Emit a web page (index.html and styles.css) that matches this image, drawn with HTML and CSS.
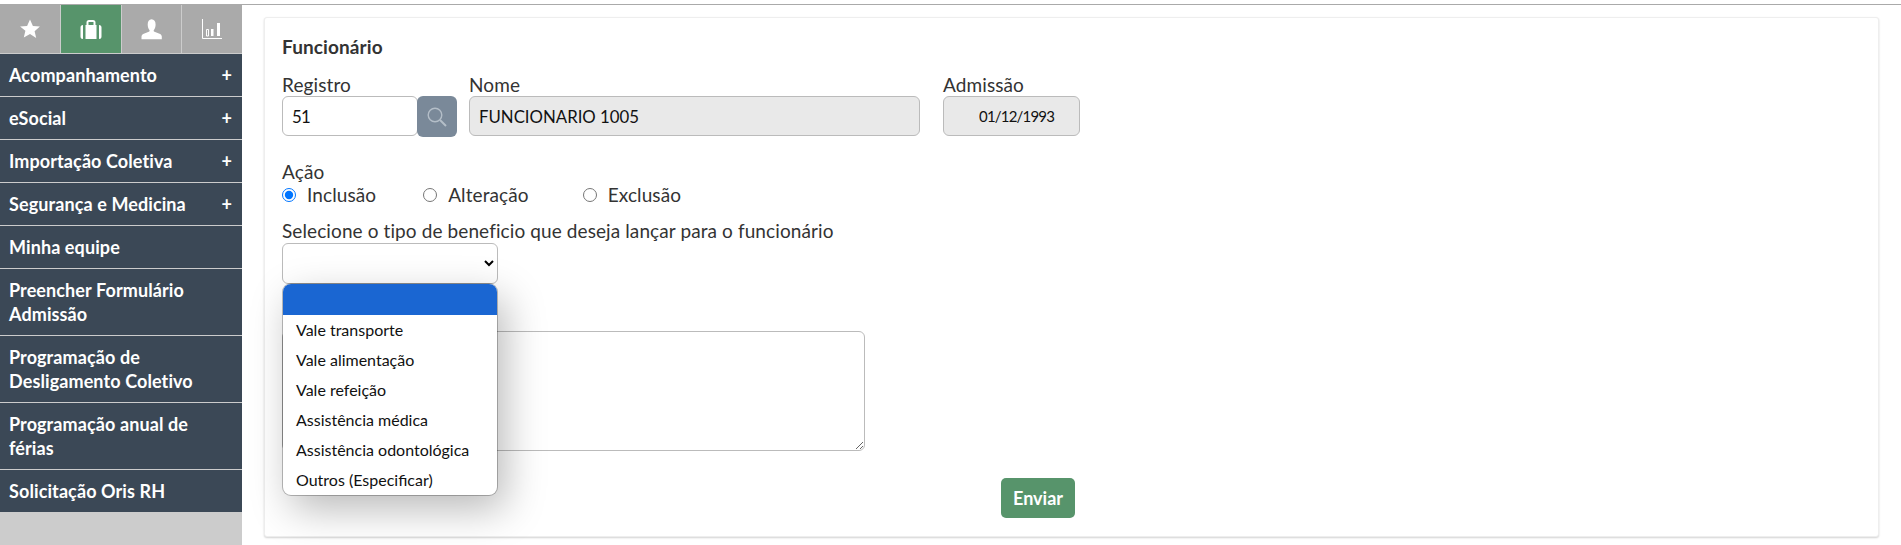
FILE: index.html
```html
<!DOCTYPE html>
<html lang="pt-BR">
<head>
  <meta charset="UTF-8">
  <title>Funcionário</title>
  <meta name="viewport" content="width=device-width, initial-scale=1.0">
  <link rel="stylesheet" href="styles.css">
</head>
<body>

  <div class="layout">

    <!-- Sidebar -->
    <aside class="sidebar">
      <div class="tabs">
        <div class="tab">
          <svg width="20" height="20" viewBox="0 0 20 20"><path fill="#fff" d="M10 0.500l2.900 6.400 7 .7-5.300 4.600 1.600 6.900L10 15l-6.200 3.600 1.600-6.900L.1 7.600l7-.7z"/></svg>
        </div>
        <div class="tab active">
          <svg width="22" height="21" viewBox="0 0 22 21"><path fill="#fff" d="M.5 8.500Q.5 6 3 6v14Q.5 20 .5 17.500zM5.500 6h1V3.500Q6.500 1 9 1h4q2.500 0 2.500 2.500V6h1v14h-11zM8.500 6h5V3H8.500zM19 6q2.500 0 2.500 2.500v9Q21.500 20 19 20z"/></svg>
        </div>
        <div class="tab">
          <svg width="21" height="21" viewBox="0 0 21 21"><path fill="#fff" d="M10.500 0.300c2.700 0 4.100 2.200 4.100 5.200 0 2.400-.8 4.200-1.700 5.400-.5.600-.2 1.600.6 1.900l4.400 1.600c1.900.7 2.900 1.700 2.900 3.200v2.600H.5v-2.600c0-1.500 1-2.500 2.900-3.200l4.400-1.600c.8-.3 1.100-1.300.6-1.900-.9-1.200-1.700-3-1.700-5.400 0-3 1.400-5.200 3.800-5.200z"/></svg>
        </div>
        <div class="tab">
          <svg width="20" height="20" viewBox="0 0 20 20"><path fill="none" stroke="#fff" stroke-width="1" d="M.5 0v19.500H20M4.500 17v-6.500h2V17z"/><path fill="#fff" d="M9 10h2.500v7H9zM15 4h3v13h-3z"/></svg>
        </div>
      </div>
      <nav class="menu">
        <a class="menu-item">Acompanhamento <span class="plus">+</span></a>
        <a class="menu-item">eSocial <span class="plus">+</span></a>
        <a class="menu-item">Importação Coletiva <span class="plus">+</span></a>
        <a class="menu-item">Segurança e Medicina <span class="plus">+</span></a>
        <a class="menu-item">Minha equipe</a>
        <a class="menu-item">Preencher Formulário Admissão</a>
        <a class="menu-item">Programação de Desligamento Coletivo</a>
        <a class="menu-item">Programação anual de férias</a>
        <a class="menu-item last">Solicitação Oris RH</a>
      </nav>
    </aside>

    <!-- Form -->
    <main class="content">
      <div class="card">
        <h3 class="card-title">Funcionário</h3>

        <div class="row">
          <div class="field">
            <label>Registro</label>
            <div class="search-group">
              <input class="input registro" type="text" value="51">
              <button class="search-btn" type="button">
                <svg width="22" height="22" viewBox="0 0 22 22"><circle cx="9" cy="9" r="6.800" fill="none" stroke="#b4bec8" stroke-width="1.400"/><path d="M14 14l6 6" stroke="#b4bec8" stroke-width="2" fill="none"/></svg>
              </button>
            </div>
          </div>
          <div class="field">
            <label>Nome</label>
            <input class="input readonly nome" type="text" value="FUNCIONARIO 1005" readonly>
          </div>
          <div class="field">
            <label>Admissão</label>
            <input class="input readonly data" type="text" value="01/12/1993" readonly>
          </div>
        </div>

        <div class="acao">
          <div class="label">Ação</div>
          <div class="radios">
            <label class="radio"><input type="radio" name="acao" checked> Inclusão</label>
            <label class="radio"><input type="radio" name="acao"> Alteração</label>
            <label class="radio"><input type="radio" name="acao"> Exclusão</label>
          </div>
        </div>

        <div class="beneficio">
          <label>Selecione o tipo de beneficio que deseja lançar para o funcionário</label>
          <div class="select-wrap">
            <select class="select"><option></option></select>
            <ul class="dropdown">
              <li class="selected">&nbsp;</li>
              <li>Vale transporte</li>
              <li>Vale alimentação</li>
              <li>Vale refeição</li>
              <li>Assistência médica</li>
              <li>Assistência odontológica</li>
              <li>Outros (Especificar)</li>
            </ul>
          </div>
        </div>

        <textarea class="obs"></textarea>

        <div class="actions">
          <button class="btn-send" type="button">Enviar</button>
        </div>
      </div>
    </main>

  </div>

</body>
</html>
```

FILE: styles.css
```css
* {
  box-sizing: border-box;
}

body {
  margin: 0;
  padding-top: 4px;
  background: #fff;
  color: #333;
  font-family: 'Lato', sans-serif;
  font-size: 19px;
  letter-spacing: 0.1px;
  line-height: 22px;
}

.layout {
  display: flex;
  min-height: 541px;
  border-top: 1px solid #aaa;
}

/* Sidebar */
.sidebar {
  width: 242px;
  flex-shrink: 0;
  background: #ccc;
}

.tabs {
  display: flex;
  height: 49px;
  background: #aaa;
  border-bottom: 1px solid #ccc;
}

.tab {
  flex: 1;
  display: flex;
  align-items: center;
  justify-content: center;
  border-right: 1px solid #ccc;
}

.tab:last-child {
  border-right: 0;
}

.tab.active {
  background: #57946b;
}

.menu-item {
  display: flex;
  align-items: center;
  justify-content: space-between;
  padding: 9px 9px;
  background: #3b4856;
  border-bottom: 1px solid #ccc;
  color: #fff;
  font-size: 18px;
  font-weight: 700;
  line-height: 24px;
}

.menu-item.last {
  border-bottom: 0;
}

.plus {
  margin-right: 1px;
}

/* Form */
.content {
  flex: 1;
  padding: 12px 22px 0 22px;
}

.card {
  height: 520px;
  padding: 18px 17px 18px;
  background: #fff;
  border: 1px solid #eee;
  border-radius: 3px;
  box-shadow: 0 1px 2px rgba(0,0,0,0.18);
}

.card-title {
  margin: 0 0 16px;
  font-size: 19px;
  line-height: 22px;
  font-weight: 700;
}

.row {
  display: flex;
  gap: 12px;
}

.field label,
.beneficio label,
.label {
  display: block;
}

.search-group {
  display: flex;
  align-items: flex-start;
}

.input {
  display: block;
  height: 40px;
  padding: 0 9px;
  border: 1px solid #bbb;
  border-radius: 6px;
  color: #111;
  font-family: inherit;
  font-size: 16.800px;
}

.registro {
  width: 136px;
  letter-spacing: -0.8px;
}

.search-btn {
  position: relative;
  display: flex;
  align-items: center;
  justify-content: center;
  width: 40px;
  height: 41px;
  margin-left: -1px;
  padding: 0;
  background: #7a8999;
  border: 0;
  border-radius: 6px;
}

.readonly {
  background: #e9e9e9;
}

.nome {
  width: 451px;
}

.data {
  width: 137px;
  margin-left: 11px;
  padding-left: 35px;
  font-size: 15px;
  letter-spacing: -0.8px;
}

.field:last-child label {
  margin-left: 11px;
}

.acao {
  margin-top: 24px;
}

.radios {
  display: flex;
  margin-top: 1px;
}

.radio {
  display: flex;
  align-items: center;
  gap: 11px;
  margin-right: 47px;
}

.radio:nth-child(2) {
  margin-right: 54px;
}

.radio input {
  margin: 0;
  width: 14px;
  height: 14px;
}

.beneficio {
  margin-top: 14px;
}

.select-wrap {
  position: relative;
  margin-top: 1px;
}

.select {
  display: block;
  width: 216px;
  height: 41px;
  background: #fff;
  border: 1px solid #bbb;
  border-radius: 6px;
  font-family: inherit;
  font-size: 16px;
}

.dropdown {
  position: absolute;
  top: 41px;
  left: 1px;
  z-index: 10;
  width: 214px;
  margin: 0;
  padding: 0;
  list-style: none;
  background: #fff;
  border-radius: 8px;
  overflow: hidden;
  color: #111;
  font-size: 16px;
  letter-spacing: 0;
  box-shadow: 0 0 0 1px rgba(0,0,0,0.25), 8px 14px 40px rgba(0,0,0,0.28);
}

.dropdown li {
  height: 30px;
  padding: 0 13px;
  line-height: 30px;
  white-space: nowrap;
}

.dropdown li.selected {
  height: 31px;
  background: #1a66d2;
}

.obs {
  display: block;
  width: 583px;
  height: 120px;
  margin-top: 47px;
  border: 1px solid #bbb;
  border-radius: 6px;
}

.actions {
  margin: 27px 0 0 719px;
}

.btn-send {
  width: 74px;
  height: 40px;
  background: #57946b;
  border: 0;
  border-radius: 5px;
  color: #fff;
  font-family: inherit;
  font-size: 18px;
  font-weight: 700;
}
```
